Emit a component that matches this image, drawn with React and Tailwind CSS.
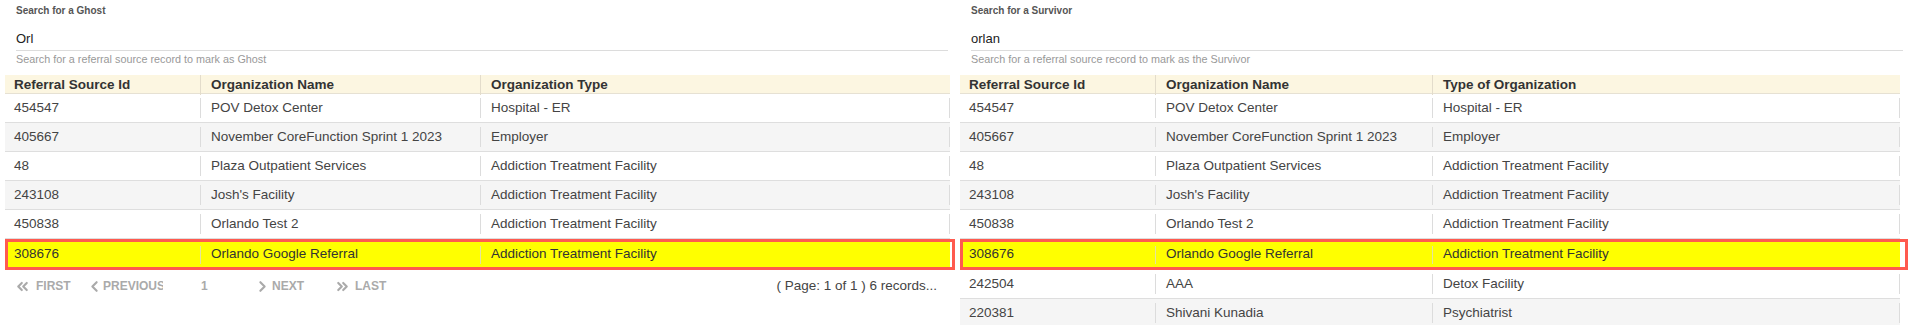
import React from "react";
import { ChevronLeft, ChevronRight, ChevronsLeft, ChevronsRight } from "lucide-react";

const ghostRows = [
    ["454547", "POV Detox Center", "Hospital - ER"],
    ["405667", "November CoreFunction Sprint 1 2023", "Employer"],
    ["48", "Plaza Outpatient Services", "Addiction Treatment Facility"],
    ["243108", "Josh's Facility", "Addiction Treatment Facility"],
    ["450838", "Orlando Test 2", "Addiction Treatment Facility"],
    ["308676", "Orlando Google Referral", "Addiction Treatment Facility"],
];

const survivorRows = [
    ...ghostRows,
    ["242504", "AAA", "Detox Facility"],
    ["220381", "Shivani Kunadia", "Psychiatrist"],
];

function SearchField({ label, value, helper }) {
    return (
        <div className="pl-[16px] pr-[7px]">
            <div className="h-[23px] pt-[5px] text-[10px] font-bold text-[#555] leading-[12px]">{label}</div>
            <div className="h-[28px] border-b border-[#dcdcdc] flex items-center text-[13px] text-[#222] pt-[4px]">{value}</div>
            <div className="h-[24px] pt-[1px] text-[10.8px] text-[#999] leading-[14px]">{helper}</div>
        </div>
    );
}

function Row({ cells, cols, highlight, striped, extra }) {
    if (highlight) {
        return (
            <div className={`h-[31px] border-[3px] border-[#ff5a4f] bg-white ${extra}`}>
                <div className={`grid ${cols.hl} h-[25px] items-center bg-[#ffff00] text-[#333]`}>
                    <div className="pl-[6px] truncate">{cells[0]}</div>
                    <div className="h-[18px] border-l border-[#e3e3a0] pl-[10px] flex items-center truncate">{cells[1]}</div>
                    <div className="h-[18px] border-l border-[#e3e3a0] pl-[10px] flex items-center truncate">{cells[2]}</div>
                </div>
            </div>
        );
    }
    return (
        <div className={`grid ${cols.row} h-[29px] items-center border-b border-[#dedede] text-[#444] ${striped ? "bg-[#f5f5f5]" : "bg-white"}`}>
            <div className="pl-[9px] truncate">{cells[0]}</div>
            <div className="h-[20px] border-l border-[#dcdcdc] pl-[10px] flex items-center truncate">{cells[1]}</div>
            <div className="h-[20px] border-x border-[#dcdcdc] pl-[10px] flex items-center truncate">{cells[2]}</div>
        </div>
    );
}

function Table({ headers, rows, cols, hlExtra }) {
    return (
        <div className="text-[13.5px]">
            <div className={`grid ${cols.row} h-[19px] items-center bg-[#fcf6e1] border-b border-[#e6e1d3] font-bold text-[#333]`}>
                {headers.map((h, i) => (
                    <div key={h} className={`h-full flex items-center ${i === 0 ? "pl-[9px]" : "border-l border-[#e3dccb] pl-[10px]"}`}>
                        {h}
                    </div>
                ))}
            </div>
            {rows.map((r, i) => (
                <Row key={r[0]} cells={r} cols={cols} striped={i % 2 === 1} highlight={r[0] === "308676"} extra={hlExtra} />
            ))}
        </div>
    );
}

function Pager() {
    return (
        <div className="flex items-center h-[32px] text-[12px] font-bold text-[#aaa] uppercase">
            <div className="ml-[14px] w-[72px] flex items-center gap-[5px]">
                <ChevronsLeft size={17} strokeWidth={3} className="shrink-0" />
                <span>First</span>
            </div>
            <div className="w-[77px] overflow-hidden whitespace-nowrap flex items-center">
                <ChevronLeft size={17} strokeWidth={3} className="shrink-0" />
                <span>Previous</span>
            </div>
            <div className="ml-[38px] w-[53px]">1</div>
            <div className="w-[80px] flex items-center gap-[1px]">
                <ChevronRight size={17} strokeWidth={3} className="shrink-0" />
                <span>Next</span>
            </div>
            <div className="flex items-center gap-[4px]">
                <ChevronsRight size={17} strokeWidth={3} className="shrink-0" />
                <span>Last</span>
            </div>
            <div className="ml-auto pr-[18px] text-[13.5px] font-normal normal-case text-[#444]">( Page: 1 of 1 ) 6 records...</div>
        </div>
    );
}

export default function App() {
    return (
        <div className="w-[1910px] h-[325px] overflow-hidden bg-white flex" style={{ fontFamily: '"Liberation Sans", Arial, sans-serif' }}>
            {/* Ghost */}
            <div className="w-[955px]">
                <SearchField label="Search for a Ghost" value="Orl" helper="Search for a referral source record to mark as Ghost" />
                <div className="pl-[5px] pr-[5px]">
                    <Table
                        headers={["Referral Source Id", "Organization Name", "Organization Type"]}
                        rows={ghostRows}
                        cols={{ row: "grid-cols-[195px_280px_1fr]", hl: "grid-cols-[192px_280px_1fr]" }}
                        hlExtra="mr-[-5px] pr-[2px]"
                    />
                </div>
                <Pager />
            </div>

            {/* Survivor */}
            <div className="w-[955px]">
                <SearchField label="Search for a Survivor" value="orlan" helper="Search for a referral source record to mark as the Survivor" />
                <div className="pl-[5px] pr-[10px]">
                    <Table
                        headers={["Referral Source Id", "Organization Name", "Type of Organization"]}
                        rows={survivorRows}
                        cols={{ row: "grid-cols-[195px_277px_1fr]", hl: "grid-cols-[192px_277px_1fr]" }}
                        hlExtra="mr-[-8px] pr-[5px]"
                    />
                </div>
            </div>
        </div>
    );
}
